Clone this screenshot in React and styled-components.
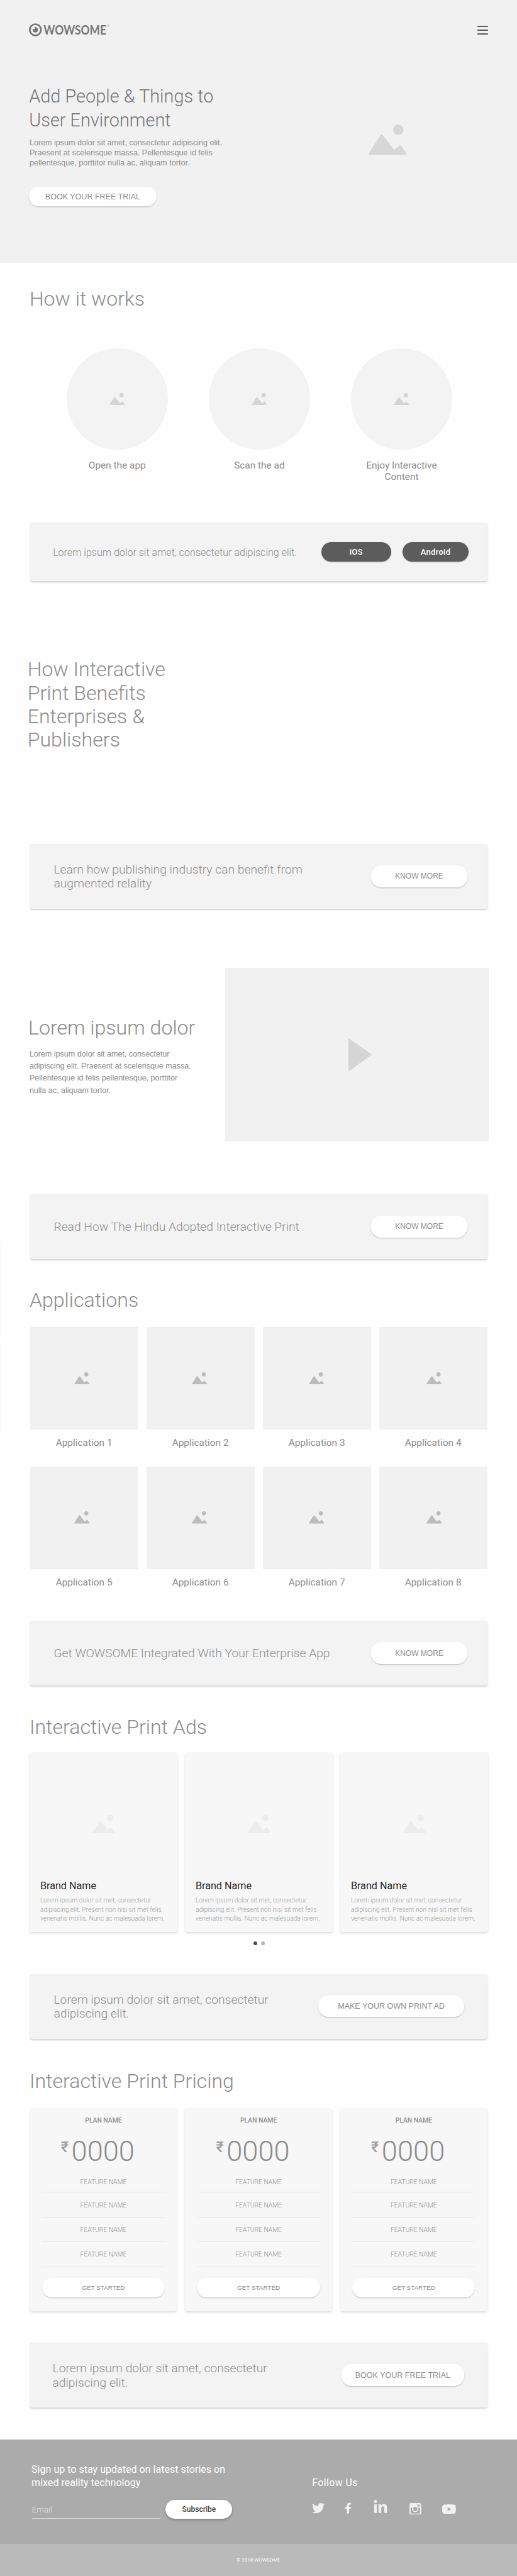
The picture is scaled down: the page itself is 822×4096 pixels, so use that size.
import React from "react";
import styled, { createGlobalStyle, css } from "styled-components";
import { FaTwitter, FaFacebookF, FaLinkedinIn } from "react-icons/fa";

// Design units are those of a 1280 x 6376 artboard.
const u = (n) => `${((n * 4096) / 6376).toFixed(3)}px`;

const color = {
  page: "#fefefe",
  hero: "#f1f1f1",
  panel: "#f3f3f3",
  card: "#f7f7f7",
  text: "#8c8c8c",
  dark: "#5c5c5c",
};

const helvetica = `"Liberation Sans", Arial, sans-serif`;

const type = (size, line, weight = 300) => css`
  font-size: ${u(size)};
  line-height: ${u(line)};
  font-weight: ${weight};
`;

const GlobalStyle = createGlobalStyle`
  *, *::before, *::after { box-sizing: border-box; }
  body {
    margin: 0;
    background: ${color.page};
    color: ${color.text};
    font-family: Roboto, sans-serif;
  }
  h1, h2, h3, p, ul { margin: 0; padding: 0; }
  ul { list-style: none; }
  svg { display: block; }
`;

const Page = styled.div`
  position: relative;
  height: ${u(6376)};
  overflow: hidden;
  background: ${color.page};
`;

const Sliver = styled.i`
  position: absolute;
  left: 0;
  top: ${(p) => u(p.$top)};
  width: ${u(2)};
  height: ${u(226)};
  background: #f8f8f8;
`;

/* ---------- shared parts ---------- */

const Section = styled.section`
  height: ${(p) => u(p.$height)};
  padding: ${(p) => u(p.$top)} ${u(73)} 0;
`;

const Heading = styled.h2`
  ${type(50, 50)}
`;

const Pill = styled.button`
  flex: none;
  display: flex;
  align-items: center;
  justify-content: center;
  width: ${(p) => u(p.$width)};
  height: ${(p) => u(p.$height || 54)};
  padding: 0;
  border: 0;
  border-radius: ${u(25)};
  background: #fff;
  color: ${color.text};
  font-family: ${helvetica};
  font-size: ${(p) => u(p.$size || 19.5)};
  white-space: nowrap;
  box-shadow: 0 ${u(2)} ${u(2.5)} rgba(0, 0, 0, 0.2);
`;

const StorePill = styled(Pill)`
  background: ${color.dark};
  color: #fff;
  font-family: Roboto, sans-serif;
  font-weight: 500;
  letter-spacing: 0.02em;
`;

const Banner = styled.section`
  display: flex;
  align-items: center;
  justify-content: space-between;
  width: ${u(1132)};
  height: ${(p) => u(p.$height || 160)};
  margin-left: ${u(74)};
  padding: 0 ${(p) => u(p.$right || 49.5)} 0 ${(p) => u(p.$left || 59)};
  border-radius: ${u(6)};
  background: ${color.panel};
  box-shadow: 0 ${u(2)} ${u(4)} rgba(0, 0, 0, 0.17);
`;

const BannerText = styled.p`
  ${(p) => (p.$small ? type(25, 30) : type(30, 35))}
  padding-top: ${u(3)};
  white-space: nowrap;
`;

const PillGroup = styled.div`
  display: flex;
  gap: ${u(28.7)};
`;

const PictureSvg = styled.svg`
  flex: none;
  width: ${(p) => u(p.$width)};
  height: ${(p) => u(p.$width * 0.8)};
  color: ${(p) => p.$fill};
`;

function Picture({ width, fill, className }) {
  return (
    <PictureSvg $width={width} $fill={fill} className={className} viewBox="0 0 94 75.2">
      <circle cx="73.8" cy="12.9" r="12.9" fill="currentColor" />
      <path
        d="M3 72.4 L32.5 27 L63 67.5 L78.5 54.8 L91 72.4 Z"
        fill="currentColor"
        stroke="currentColor"
        strokeWidth="5.6"
        strokeLinejoin="round"
      />
    </PictureSvg>
  );
}

/* ---------- hero ---------- */

const Hero = styled.header`
  height: ${u(650)};
  padding: ${u(58)} ${u(71)} 0 ${u(72)};
  background: ${color.hero};
`;

const TopBar = styled.div`
  display: flex;
  align-items: center;
  justify-content: space-between;
  height: ${u(32)};
`;

const LogoSvg = styled.svg`
  width: ${u(202)};
  height: ${u(48)};
  overflow: visible;
  color: #757575;
`;

const LogoText = styled.text`
  font-family: Lato, sans-serif;
  font-weight: 700;
  font-size: 31.5px;
`;

const Burger = styled.div`
  display: flex;
  flex-direction: column;
  justify-content: space-between;
  width: ${u(27.5)};
  height: ${u(21.2)};
  margin-top: ${u(1)};
`;

const BurgerLine = styled.span`
  height: ${u(3.2)};
  border-radius: ${u(1)};
  background: ${color.dark};
`;

const HeroBody = styled.div`
  display: flex;
  justify-content: space-between;
  padding: ${u(118.4)} ${u(202.5)} 0 0;
`;

const HeroTitle = styled.h1`
  ${type(45, 59.8)}
  color: #757575;
  white-space: nowrap;
`;

const HeroText = styled.p`
  ${type(19.6, 25, 400)}
  margin: ${u(13.2)} 0 ${u(45.8)} ${u(1)};
  font-family: ${helvetica};
  color: #8e8e8e;
  white-space: nowrap;
`;

const HeroPicture = styled(Picture)`
  margin-top: ${u(99.6)};
`;

/* ---------- how it works ---------- */

const Steps = styled.div`
  display: flex;
  gap: ${u(102)};
  margin: ${u(99)} 0 0 ${u(92)};
`;

const Step = styled.div`
  width: ${u(250)};
  ${type(24, 28, 400)}
  text-align: center;
`;

const Disc = styled.div`
  display: flex;
  align-items: center;
  justify-content: center;
  height: ${u(250)};
  margin-bottom: ${u(25.3)};
  border-radius: 50%;
  background: ${color.panel};
`;

const Benefits = styled(Heading)`
  margin-left: ${u(-5)};
  line-height: ${u(58)};
`;

/* ---------- video ---------- */

const VideoRow = styled.div`
  display: flex;
  justify-content: space-between;
  width: ${u(1136)};
`;

const VideoCopy = styled.div`
  padding-top: ${u(122.6)};
`;

const VideoTitle = styled(Heading)`
  margin-left: ${u(-3)};
`;

const VideoText = styled.p`
  ${type(19.5, 30, 400)}
  margin-top: ${u(26)};
  font-family: ${helvetica};
  color: #8c8c8c;
  white-space: nowrap;
`;

const Video = styled.div`
  display: flex;
  align-items: center;
  width: ${u(652)};
  height: ${u(430)};
  padding-left: ${u(306)};
  background: ${color.hero};
`;

const PlaySvg = styled.svg`
  width: ${u(58)};
  height: ${u(82)};
`;

/* ---------- applications ---------- */

const AppGrid = styled.div`
  display: grid;
  grid-template-columns: repeat(4, ${u(268)});
  gap: ${u(44)} ${u(20)};
  margin: ${u(41)} 0 0 ${u(1)};
`;

const Application = styled.div`
  ${type(24, 28, 400)}
  text-align: center;
`;

const AppTile = styled.div`
  display: flex;
  align-items: center;
  padding-left: ${(p) => u(110.3 + p.$column * 2.3)};
  height: ${u(254)};
  margin-bottom: ${u(19)};
  background: ${color.hero};
`;

/* ---------- ads ---------- */

const AdRow = styled.div`
  display: grid;
  grid-template-columns: repeat(3, ${u(366)});
  gap: ${u(18.5)};
  margin-top: ${u(39)};
`;

const AdCard = styled.article`
  height: ${u(443)};
  padding: ${u(154)} ${u(20)} 0 ${u(26.5)};
  border-radius: ${u(6)};
  background: ${color.card};
  box-shadow: 0 ${u(2)} ${u(6)} rgba(0, 0, 0, 0.13);
`;

const AdPicture = styled(Picture)`
  margin: 0 auto ${u(115.8)} ${u(130)};
`;

const Brand = styled.h3`
  ${type(25.2, 30, 400)}
  color: #2a2a2a;
`;

const AdText = styled.p`
  ${type(16, 22)}
  margin-top: ${u(11)};
  color: #a0a0a0;
  white-space: nowrap;
`;

const Dots = styled.div`
  display: flex;
  justify-content: center;
  gap: ${u(8)};
  margin: ${u(23.5)} 0 0 ${u(3)};
`;

const Dot = styled.span`
  width: ${u(10)};
  height: ${u(10)};
  border-radius: 50%;
  background: ${(p) => (p.$active ? "#4a4a4a" : "#b5b5b5")};
`;

/* ---------- pricing ---------- */

const PlanRow = styled.div`
  display: grid;
  grid-template-columns: repeat(3, ${u(364)});
  gap: ${u(20)};
  margin: ${u(42.5)} 0 0 ${u(1)};
`;

const Plan = styled.article`
  height: ${u(502)};
  padding: ${u(21.2)} ${u(30)} 0;
  border-radius: ${u(6)};
  background: ${color.card};
  text-align: center;
  box-shadow: 0 ${u(2)} ${u(6)} rgba(0, 0, 0, 0.13);
`;

const PlanName = styled.h3`
  ${type(16.1, 20, 500)}
`;

const Price = styled.div`
  display: flex;
  align-items: flex-start;
  gap: ${u(7)};
  margin: ${u(29.6)} 0 0 ${u(46.6)};
  ${type(70.5, 72)}
`;

const Rupee = styled.span`
  ${type(36.7, 36, 500)}
  margin-top: ${u(7.5)};
  color: #a0a0a0;
`;

const Features = styled.ul`
  margin-bottom: ${u(26.5)};
`;

const Feature = styled.li`
  height: ${u(61)};
  padding-top: ${u(22.3)};
  border-bottom: 1px solid #e8e8e8;
  ${type(16, 20)}
  color: #8e8e8e;

  &:first-child {
    height: ${u(65.5)};
    padding-top: ${u(30.7)};
  }
  &:last-child {
    height: ${u(63)};
    padding-top: ${u(21.7)};
  }
`;

/* ---------- footer ---------- */

const Footer = styled.footer`
  display: flex;
  justify-content: space-between;
  height: ${u(258)};
  padding: ${u(59.2)} ${u(151.5)} 0 ${u(78)};
  background: #ababab;
  color: #fff;
`;

const FooterTitle = styled.h3`
  ${type(25, 32, 400)}
  white-space: nowrap;
`;

const FollowTitle = styled(FooterTitle)`
  letter-spacing: 0.02em;
`;

const Form = styled.div`
  display: flex;
  gap: ${u(12.4)};
  margin: ${u(25.3)} 0 0 ${u(1)};
`;

const EmailField = styled.div`
  width: ${u(318.6)};
  height: ${u(46.5)};
  padding-top: ${u(13.5)};
  border-bottom: 1px solid #d8d8d8;
  ${type(20.6, 24)}
  color: #e2e2e2;
`;

const Subscribe = styled(Pill)`
  color: #4a4a4a;
  font-family: Roboto, sans-serif;
  font-weight: 500;
  box-shadow: 0 ${u(3)} ${u(7)} rgba(0, 0, 0, 0.25);
`;

const Follow = styled.div`
  width: ${u(355.5)};
  padding-top: ${u(32)};
`;

const Socials = styled.div`
  display: flex;
  margin-top: ${u(27.8)};
  color: #f0f0f0;
`;

const Social = styled.span`
  margin: ${(p) => u(p.$top)} 0 0 ${(p) => u(p.$gap)};

  svg {
    width: ${(p) => u(p.$width)};
    height: ${(p) => u(p.$height)};
  }
`;

const Legal = styled.div`
  display: flex;
  align-items: center;
  justify-content: center;
  height: ${u(79)};
  padding-top: ${u(2)};
  background: #bababa;
  color: #fff;
  ${type(12.5, 16, 400)}
`;

function Logo() {
  return (
    <LogoSvg viewBox="0 -8 202 48">
      <circle cx="16" cy="16" r="13.9" fill="none" stroke="currentColor" strokeWidth="4.2" />
      <path
        d="M15.8 9.2 A6.8 6.8 0 1 1 9.6 13 Q10.6 15 13.2 14.6 Q16.2 13.6 15.2 10.8 Q14.6 9.6 13.4 9.8 Z"
        fill="currentColor"
      />
      <LogoText x="36.3" y="27.2" fill="currentColor" textLength="155" lengthAdjust="spacingAndGlyphs">
        WOWSOME
      </LogoText>
      <circle cx="196.7" cy="6" r="1.8" fill="none" stroke="currentColor" strokeWidth="0.8" />
    </LogoSvg>
  );
}

function Instagram() {
  return (
    <svg viewBox="0 0 29 29">
      <path
        fillRule="evenodd"
        fill="currentColor"
        d="M5 0H24A5 5 0 0 1 29 5V24A5 5 0 0 1 24 29H5A5 5 0 0 1 0 24V5A5 5 0 0 1 5 0Z M20.5 3.6V8.6H25.6V3.6Z M3 11.6V23.5A2.6 2.6 0 0 0 5.6 26.1H23.4A2.6 2.6 0 0 0 26 23.5V11.6H21.4A7.6 7.6 0 1 1 7.6 11.6Z"
      />
      <circle cx="14.5" cy="14.6" r="6.3" fill="#ababab" stroke="currentColor" strokeWidth="2.3" />
    </svg>
  );
}

function Youtube() {
  return (
    <svg viewBox="0 0 34 24">
      <path
        fillRule="evenodd"
        fill="currentColor"
        d="M5 .6Q17-.5 29 .6Q33.3 1 33.6 5.4Q34.3 12 33.6 18.6Q33.3 23 29 23.4Q17 24.5 5 23.4Q.7 23 .4 18.6Q-.3 12 .4 5.4Q.7 1 5 .6Z M13.6 7.2V16.8L22.4 12Z"
      />
    </svg>
  );
}

const steps = [["Open the app"], ["Scan the ad"], ["Enjoy Interactive", "Content"]];
const apps = [1, 2, 3, 4, 5, 6, 7, 8];
const cards = [0, 1, 2];
const features = [0, 1, 2, 3];

const lines = (list) =>
  list.map((line, i) => (
    <React.Fragment key={line}>
      {i > 0 && <br />}
      {line}
    </React.Fragment>
  ));

export default function App() {
  return (
    <Page>
      <GlobalStyle />
      <Hero>
        <TopBar>
          <Logo />
          <Burger>
            <BurgerLine />
            <BurgerLine />
            <BurgerLine />
          </Burger>
        </TopBar>
        <HeroBody>
          <div>
            <HeroTitle>{lines(["Add People & Things to", "User Environment"])}</HeroTitle>
            <HeroText>
              {lines([
                "Lorem ipsum dolor sit amet, consectetur adipiscing elit.",
                "Praesent at scelerisque massa. Pellentesque id felis",
                "pellentesque, porttitor nulla ac, aliquam tortor.",
              ])}
            </HeroText>
            <Pill $width={315} $height={49}>BOOK YOUR FREE TRIAL</Pill>
          </div>
          <HeroPicture width={94} fill="#d7d7d7" />
        </HeroBody>
      </Hero>

      <Section $height={644} $top={64}>
        <Heading>How it works</Heading>
        <Steps>
          {steps.map((s) => (
            <Step key={s[0]}>
              <Disc>
                <Picture width={38} fill="#d4d4d4" />
              </Disc>
              {lines(s)}
            </Step>
          ))}
        </Steps>
      </Section>
      <Banner $height={144} $left={57} $right={46.5}>
        <BannerText $small>Lorem ipsum dolor sit amet, consectetur adipiscing elit.</BannerText>
        <PillGroup>
          <StorePill $width={173} $height={49} $size={20.3}>iOS</StorePill>
          <StorePill $width={163} $height={49} $size={20.3}>Android</StorePill>
        </PillGroup>
      </Banner>

      <Section $height={650.4} $top={191}>
        <Benefits>{lines(["How Interactive", "Print Benefits", "Enterprises &", "Publishers"])}</Benefits>
      </Section>
      <Banner $height={160.6}>
        <BannerText>{lines(["Learn how publishing industry can benefit from", "augmented relality"])}</BannerText>
        <Pill $width={238} $size={18.7}>KNOW MORE</Pill>
      </Banner>

      <Section $height={707} $top={147}>
        <VideoRow>
          <VideoCopy>
            <VideoTitle>Lorem ipsum dolor</VideoTitle>
            <VideoText>
              {lines([
                "Lorem ipsum dolor sit amet, consectetur",
                "adipiscing elit. Praesent at scelerisque massa.",
                "Pellentesque id felis pellentesque, porttitor",
                "nulla ac, aliquam tortor.",
              ])}
            </VideoText>
          </VideoCopy>
          <Video>
            <PlaySvg viewBox="0 0 58 82">
              <path d="M0 0L58 40L0 82Z" fill="#d5d5d5" />
            </PlaySvg>
          </Video>
        </VideoRow>
      </Section>
      <Banner>
        <BannerText>Read How The Hindu Adopted Interactive Print</BannerText>
        <Pill $width={238} $size={18.7}>KNOW MORE</Pill>
      </Banner>

      <Section $height={896} $top={77.5}>
        <Heading>Applications</Heading>
        <AppGrid>
          {apps.map((n) => (
            <Application key={n}>
              <AppTile $column={(n - 1) % 4}>
                <Picture width={38} fill="#bcbcbc" />
              </AppTile>
              Application {n}
            </Application>
          ))}
        </AppGrid>
      </Section>
      <Banner>
        <BannerText>Get WOWSOME Integrated With Your Enterprise App</BannerText>
        <Pill $width={238} $size={18.7}>KNOW MORE</Pill>
      </Banner>

      <Section $height={714} $top={78}>
        <Heading>Interactive Print Ads</Heading>
        <AdRow>
          {cards.map((n) => (
            <AdCard key={n}>
              <AdPicture width={55.5} fill="#ececec" />
              <Brand>Brand Name</Brand>
              <AdText>
                {lines([
                  "Lorem ipsum dolor sit met, consectetur",
                  "adipiscing elit. Present non nisi sit met felis",
                  "venenatis mollis. Nunc ac malesuada lorem,",
                ])}
              </AdText>
            </AdCard>
          ))}
        </AdRow>
        <Dots>
          <Dot $active />
          <Dot />
        </Dots>
      </Section>
      <Banner $right={57}>
        <BannerText>{lines(["Lorem ipsum dolor sit amet, consectetur", "adipiscing elit."])}</BannerText>
        <Pill $width={361}>MAKE YOUR OWN PRINT AD</Pill>
      </Banner>

      <Section $height={753} $top={80.5}>
        <Heading>Interactive Print Pricing</Heading>
        <PlanRow>
          {cards.map((n) => (
            <Plan key={n}>
              <PlanName>PLAN NAME</PlanName>
              <Price>
                <Rupee>₹</Rupee>
                0000
              </Price>
              <Features>
                {features.map((f) => (
                  <Feature key={f}>FEATURE NAME</Feature>
                ))}
              </Features>
              <Pill $width={304} $height={48} $size={15.4}>GET STARTED</Pill>
            </Plan>
          ))}
        </PlanRow>
      </Section>
      <Banner $left={56} $right={57}>
        <BannerText>{lines(["Lorem ipsum dolor sit amet, consectetur", "adipiscing elit."])}</BannerText>
        <Pill $width={304.5}>BOOK YOUR FREE TRIAL</Pill>
      </Banner>
      <Section $height={80} $top={0} />

      <Footer>
        <div>
          <FooterTitle>{lines(["Sign up to stay updated on latest stories on", "mixed reality technology"])}</FooterTitle>
          <Form>
            <EmailField>Email</EmailField>
            <Subscribe $width={165} $height={46.5} $size={18.8}>Subscribe</Subscribe>
          </Form>
        </div>
        <Follow>
          <FollowTitle>Follow Us</FollowTitle>
          <Socials>
            <Social $width={31.5} $height={31.5} $top={3} $gap={0}><FaTwitter /></Social>
            <Social $width={17} $height={28.5} $top={4.7} $gap={48.5}><FaFacebookF /></Social>
            <Social $width={37} $height={37} $top={-2} $gap={54}><FaLinkedinIn /></Social>
            <Social $width={29} $height={29} $top={5.3} $gap={53.5}><Instagram /></Social>
            <Social $width={34} $height={24} $top={8.5} $gap={51.3}><Youtube /></Social>
          </Socials>
        </Follow>
      </Footer>
      <Legal>© 2018 WOWSOME</Legal>

      <Sliver $top={3078} />
      <Sliver $top={3325} />
    </Page>
  );
}
